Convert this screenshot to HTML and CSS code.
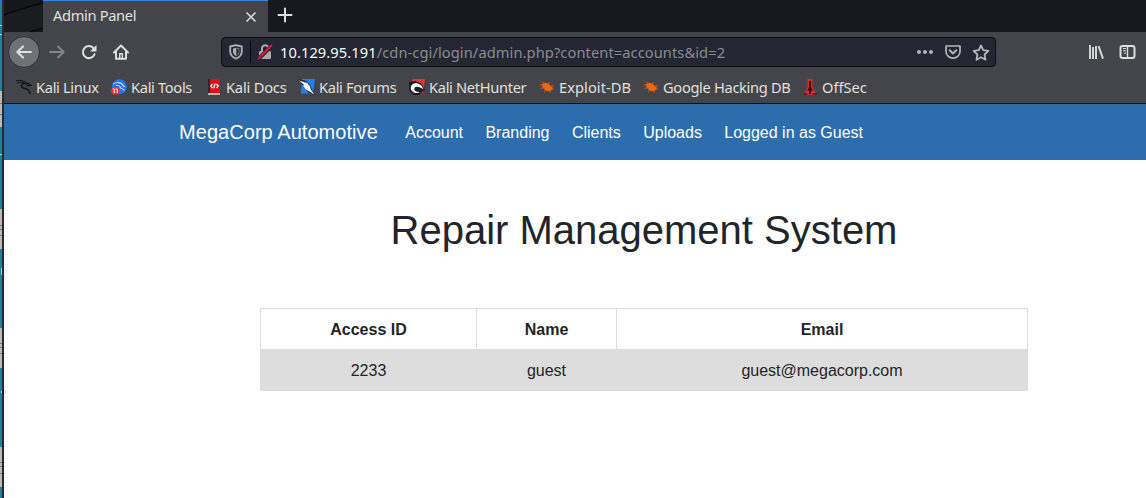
FILE: index.html
```html
<!DOCTYPE html>
<html lang="en">
<head>
<meta charset="utf-8">
<title>Admin Panel</title>
<link rel="stylesheet" href="styles.css">
</head>
<body>
<div class="desktop">
  <svg class="desktop-edge" width="4" height="498" viewBox="0 0 4 498" shape-rendering="crispEdges">
    <rect width="2" height="498" fill="#1d8498"/>
    <path d="M0 0h2v5H0z" fill="#2c6fd8"/>
    <path d="M0 91h2v36H0zM0 209h2v40H0zM0 328h2v40H0zM0 447h2v40H0z" fill="#bdbab6"/>
    <path d="M0 225h2M0 229h2M0 235h2M0 343h2M0 347h2M0 353h2M0 462h2M0 466h2M0 473h2M0 103h2M0 114h2" stroke="#77787a" stroke-width="1"/>
    <path d="M0 25h2M0 34h2M0 154h2M1 268v7M1 391v2" stroke="#a6d5dc"/>
    <rect x="2" width="2" height="498" fill="#272a31"/>
  </svg>
  <div class="window">
    <header class="chrome">
      <div class="tabs">
        <svg class="tab-lead" width="39" height="32" viewBox="0 0 39 32"><path d="M0 0h39v32H0z" fill="#16171b"/><path d="M0 15C13 10 27 6 39 4v24L28 32H0z" fill="#1b1c20"/><path d="M0 15C13 10 27 6 39 3M26 32l13-4" fill="none" stroke="#08090b" stroke-width="1.5"/></svg>
        <div class="tab"><span>Admin Panel</span>
          <svg width="12" height="12" viewBox="0 0 12 12"><path d="M1.500 1.500l9 9M10.500 1.500l-9 9" stroke="#d4d5d4" stroke-width="1.700"/></svg>
        </div>
        <svg class="new-tab" width="16" height="16" viewBox="0 0 16 16"><path d="M8 1.500v13M1.500 8h13" stroke="#dededb" stroke-width="2" stroke-linecap="round"/></svg>
      </div>
      <div class="toolbar">
        <div class="back"><svg width="16" height="16" viewBox="0 0 16 16" fill="none" stroke="#e0e0dd" stroke-width="2" stroke-linecap="round" stroke-linejoin="round"><path d="M15 8H1.500M7 2.500L1.300 8 7 13.500"/></svg></div>
        <svg class="forward" width="16" height="16" viewBox="0 0 16 16" fill="none" stroke="#83848a" stroke-width="1.900" stroke-linecap="round" stroke-linejoin="round"><path d="M1 8h13.500M9 2.500L14.700 8 9 13.500"/></svg>
        <svg class="reload" width="16" height="16" viewBox="0 0 16 16"><path d="M13.500 10.300A6 6 0 1 1 12.300 4L14 5.700" fill="none" stroke="#dededb" stroke-width="2" stroke-linecap="round"/><path d="M15.500 1v6.500H9z" fill="#dededb"/></svg>
        <svg class="home" width="16" height="16" viewBox="0 0 16 16" fill="none" stroke="#dededb" stroke-width="2" stroke-linecap="round" stroke-linejoin="round"><path d="M1 8.500l7-7 7 7M3 8v6.800h10V8"/><path d="M6.700 15V9.700h2.600V15" stroke-width="1.400"/></svg>
        <div class="address">
          <svg width="14" height="16" viewBox="0 0 14 16"><path d="M7 1.200L12.800 2.500v4.800c0 3.200-2.200 6-5.800 7.400-3.600-1.400-5.800-4.200-5.800-7.400V2.500z" fill="none" stroke="#b1b1b3" stroke-width="1.800" stroke-linejoin="round"/><path d="M7 4v8c2.200-1 3-2.600 3-4.700V4.600z" fill="none" stroke="#b1b1b3" stroke-width=".6"/><path d="M7 4v8c-2.200-1-3-2.600-3-4.700V4.600z" fill="#b1b1b3"/></svg>
          <i class="divider"></i>
          <svg width="16" height="16" viewBox="0 0 16 16"><path d="M5 7V4.500a3.200 3.200 0 0 1 6.400 0V7" fill="none" stroke="#aaaaae" stroke-width="2"/><rect x="2" y="7" width="12" height="8" rx="1.200" fill="#aaaaae"/><path d="M1.300 15L15 1.800" stroke="#242631" stroke-width="4"/><path d="M1.500 14.500L14.500 1.500" stroke="#f20b3c" stroke-width="2" stroke-linecap="round"/></svg>
          <div class="url"><b>10.129.95.191</b>/cdn-cgi/login/admin.php?content=accounts&amp;id=2</div>
          <div class="actions">
            <svg width="18" height="16" viewBox="0 0 18 16" fill="#b5b5b8"><circle cx="3" cy="8" r="2"/><circle cx="9" cy="8" r="2"/><circle cx="15" cy="8" r="2"/></svg>
            <svg width="16" height="16" viewBox="0 0 16 16" fill="none" stroke="#b5b5b8" stroke-width="2" stroke-linejoin="round" stroke-linecap="round"><path d="M1 2h14v5.500a7 6.700 0 0 1-14 0z" stroke-width="1.700"/><path d="M4.700 6.300L8 9.500l3.300-3.200"/></svg>
            <svg width="18" height="17" viewBox="0 0 18 17"><path d="M9 1.500l2.200 4.700 5.200.7-3.800 3.600.9 5.200L9 13.200l-4.500 2.500.9-5.200L1.600 6.900l5.200-.7z" fill="none" stroke="#b5b5b8" stroke-width="1.800" stroke-linejoin="round"/></svg>
          </div>
        </div>
        <div class="tools">
          <svg width="16" height="16" viewBox="0 0 16 16" stroke="#d5d5d2" stroke-width="2"><path d="M2 1v14M5 3v12M8 2v13M10.600 2.200L15 14.700"/></svg>
          <svg width="17" height="16" viewBox="0 0 17 16" fill="none" stroke="#dededb"><rect x="1.500" y="2" width="14" height="12" rx="2" stroke-width="2"/><path d="M8.500 2v12" stroke-width="1.400"/><path d="M4 4.500h3M4 6.800h3M5 9.200h2"/></svg>
        </div>
      </div>
      <nav class="bookmarks">
        <a><svg width="16" height="16" viewBox="0 0 16 16" fill="none" stroke="#111215" stroke-linecap="round"><path d="M.5 1.500C5 .8 9 2 11 4.500M1 4c3-1.500 6-1 8 .5" stroke-width="1"/><path d="M9 4.500c-5 0-4.500 4.500 0 5 3.500.4 4.500 2.500 5 5" stroke-width="1.500"/><path d="M10 4l2.500.5 2.500 2-2.500.2-2-1" stroke-width="1.200"/></svg>Kali Linux</a>
        <a><svg width="16" height="16" viewBox="0 0 16 16"><circle cx="8.300" cy="7.700" r="7.400" fill="#2675f5"/><path d="M2 5c4-2.500 8-1.500 10 1M5 6.500c5-1.500 3 3 6 3.200 1.500.2 2.200 1 2.400 2M11 6l3 2" fill="none" stroke="#bcd8ff" stroke-width="1.100"/><circle cx="4.200" cy="11.700" r="4" fill="#f53133"/><path d="M1.800 10h1.500v4M4.700 10h1.500v4" fill="none" stroke="#fff"/></svg>Kali Tools</a>
        <a class="docs"><svg width="16" height="16" viewBox="0 0 16 16"><path d="M2 0h12v14l-1 2H2z" fill="#dc1215"/><path d="M2 0h2v14H2z" fill="#262a39"/><path d="M2 14h12v2H2z" fill="#c8b7b3"/><path d="M6.500 5L4.800 7l1.700 2M10.500 5l1.700 2-1.700 2M9.200 4.600L7.700 9.400" fill="none" stroke="#fff" stroke-width="1.300"/></svg>Kali Docs</a>
        <a><svg width="16" height="16" viewBox="0 0 16 16"><path d="M3 0h13l-2 14.500H2z" fill="#237fee"/><path d="M0 0l7 2 4 4 3 7 2 3-6-2-6-7z" fill="#20242b"/><path d="M.3 1.500l3 1 5 1.500 2.500 3 1 3.500 3.500 5-5.200-3.200-3.500-2-3-4 2 .3z" fill="#fafafa"/></svg>Kali Forums</a>
        <a><svg width="16" height="16" viewBox="0 0 16 16"><path d="M4 0h12l-2 14.500H7L2 3z" fill="#e92f37"/><path d="M0 3l6-1 6 2 4 7-2 1-4 4H4L0 11z" fill="#1b1d22"/><path d="M14.500 10.500C13.500 6 9.500 3.700 6 4.200 1.500 5 .8 9.500 3 12c2 2.500 5.700 2.600 8 1-3.500.2-6-1-5.700-3.400.4-2.900 5.400-2.400 9.200.9z" fill="#fff"/></svg>Kali NetHunter</a>
        <a class="exploit"><svg width="16" height="16" viewBox="0 0 16 16"><path d="M3.500 4.500l3-.7 3 1 2.700 2.500 1.600 1.500-.8 2.200-2.800 1.300-3-.5-2.500-2-1.500-2.500z" fill="#ef680f"/><path d="M4.500 6L.8 5.500M5 8.500l-3.500.8M7 11l-2 2M10.500 12l1.200 1.800M9 5l1.500-2M12 7.500l3-1M5 5L3.500 2.500M13 9.500l2 1" stroke="#cf5c14"/></svg>Exploit-DB</a>
        <a><svg width="16" height="16" viewBox="0 0 16 16"><path d="M3.500 4.500l3-.7 3 1 2.700 2.500 1.600 1.500-.8 2.200-2.800 1.300-3-.5-2.500-2-1.500-2.500z" fill="#ef680f"/><path d="M4.500 6L.8 5.500M5 8.500l-3.500.8M7 11l-2 2M10.500 12l1.200 1.800M9 5l1.500-2M12 7.500l3-1M5 5L3.500 2.500M13 9.500l2 1" stroke="#cf5c14"/></svg>Google Hacking DB</a>
        <a class="offsec"><svg width="16" height="16" viewBox="0 0 16 16"><path d="M4.500 0h5v8l4 7.500H1L4.500 8z" fill="#e3242d"/><path d="M6.200 2h1.700v6l2 3.500H8V15H6v-3.500H4.200l2-3.500z" fill="#360b13"/><path d="M1 15h3M10 15h4" stroke="#6f1721" stroke-width="2"/></svg>OffSec</a>
      </nav>
    </header>
    <nav class="site-nav">
      <span class="brand">MegaCorp Automotive</span>
      <a>Account</a><a>Branding</a><a>Clients</a><a>Uploads</a><a>Logged in as Guest</a>
    </nav>
    <main>
      <h1>Repair Management System</h1>
      <table>
        <thead><tr><th class="col-id">Access ID</th><th class="col-name">Name</th><th>Email</th></tr></thead>
        <tbody><tr><td>2233</td><td>guest</td><td>guest@megacorp.com</td></tr></tbody>
      </table>
    </main>
  </div>
</div>
</body>
</html>
```
FILE: styles.css
```css
* { box-sizing: border-box; }
body { margin: 0; background: #fff; overflow: hidden; }
svg { display: block; flex: none; }
.desktop { display: flex; width: 1146px; height: 498px; }
.window { flex: 1; min-width: 0; }
.chrome { height: 104px; background: #43454b; border-bottom: 1px solid #101216; font: 14.67px/20px "Noto Sans", sans-serif; color: #e0e0dd; white-space: nowrap; }
.tabs { display: flex; height: 32px; background: #18191e; }
.tab { width: 225px; display: flex; align-items: center; justify-content: space-between; padding: 0 11px 0 10px; background: #43454b; border-top: 1px solid #3584e4; letter-spacing: -0.35px; }
.tab span { padding-bottom: 3px; }
.new-tab { margin: 7px 0 0 9px; }
.toolbar { display: flex; align-items: center; height: 40px; padding-left: 4px; }
.back { width: 32px; height: 32px; border-radius: 50%; background: #707176; border: 1px solid #2f3136; display: grid; place-items: center; }
.forward { margin-left: 9px; }
.reload { margin-left: 16px; }
.home { margin-left: 16px; }
.address { display: flex; align-items: center; width: 775px; height: 30px; margin-left: 92px; padding: 0 5px 0 7px; border: 1px solid #0f1015; border-radius: 4px; background: #242631; }
.divider { width: 1px; height: 22px; background: #0c0d12; margin: 0 6px 0 7px; }
.url { margin-left: 7px; color: #8b8b91; letter-spacing: 0.08px; }
.url b { font-weight: 400; color: #f9f9fa; }
.actions { display: flex; align-items: center; gap: 11px; margin-left: auto; }
.tools { display: flex; gap: 15px; margin-left: 92px; }
.bookmarks { display: grid; grid-template-columns: 95px 95px 93px 110px 130px 104px 160px 80px; height: 30px; align-items: center; padding-left: 12px; letter-spacing: -0.33px; }
.bookmarks a { display: flex; align-items: center; gap: 4px; }
.bookmarks .docs { letter-spacing: -0.2px; }
.bookmarks .exploit { letter-spacing: 0.05px; }
.bookmarks .offsec { gap: 3px; letter-spacing: 0; }
.site-nav { display: flex; align-items: center; gap: 22.4px; height: 56px; padding-left: 175px; background: #2c6dae; color: #fff; font: 16px/24px "Liberation Sans", Arial, sans-serif; }
.site-nav a { padding-top: 2px; }
.brand { font-size: 20px; margin-right: 5px; letter-spacing: 0.05px; }
main { padding: 46px 0 0 256px; font: 16px/24px "Liberation Sans", Arial, sans-serif; color: #212529; }
h1 { width: 768px; margin: 0 0 54px; font-size: 40px; font-weight: 400; line-height: 48px; text-align: center; }
table { width: 768px; border-collapse: collapse; table-layout: fixed; text-align: center; }
th, td { height: 41px; padding: 9px 8px 7px; border: 1px solid #ddd; }
.col-id { width: 216px; }
.col-name { width: 140px; }
tbody tr { background: #ddd; }
```
